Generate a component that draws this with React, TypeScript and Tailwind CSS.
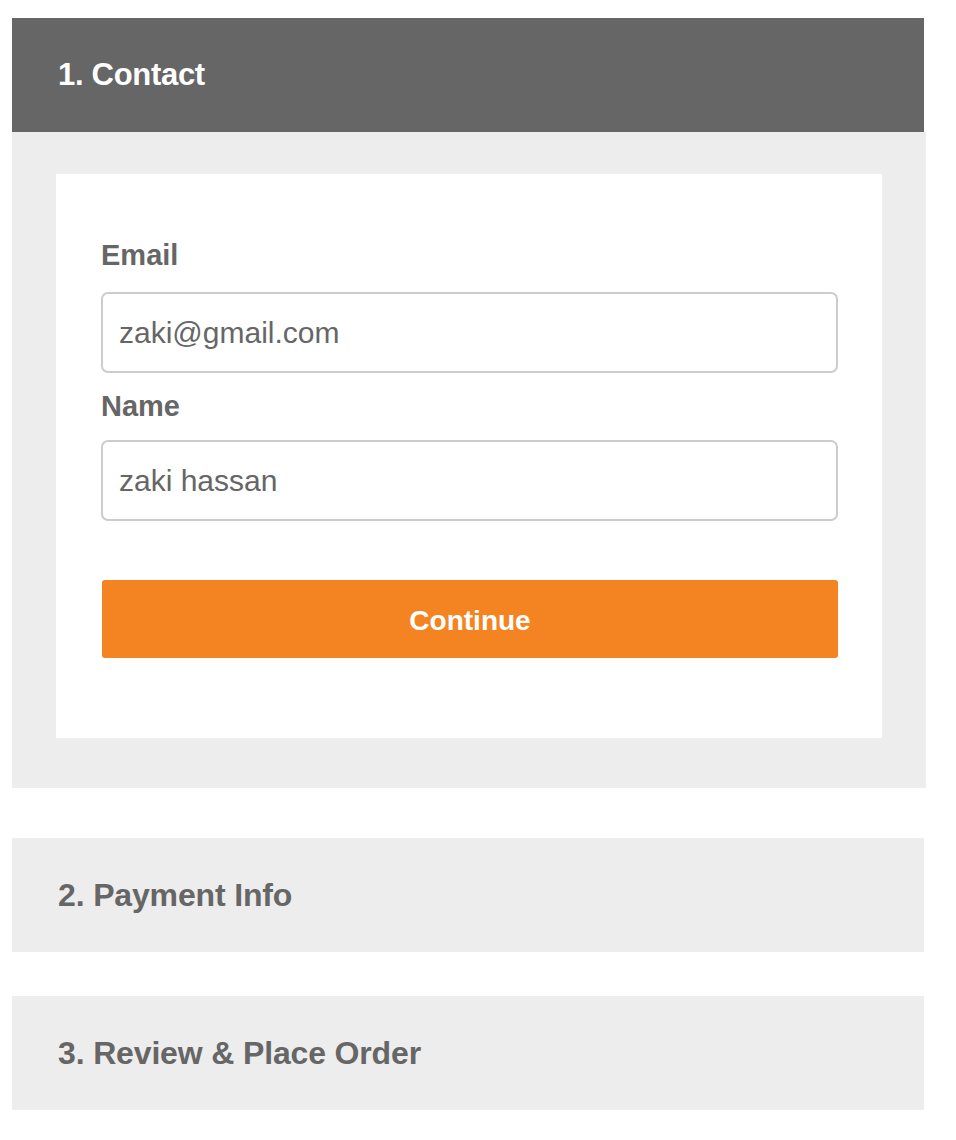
import { useState } from "react";

const font = { fontFamily: '"Liberation Sans", Arial, Helvetica, sans-serif' };

function CollapsedStep({ title, className = "" }: { title: string; className?: string }) {
  return (
    <div className={`flex h-[114px] w-[912px] items-center bg-[#ededed] pl-[46px] ${className}`}>
      <h2 className="text-[32px] font-bold leading-[36px] tracking-[-0.15px] text-[#666]">{title}</h2>
    </div>
  );
}

export default function App() {
  const [email, setEmail] = useState("zaki@gmail.com");
  const [name, setName] = useState("zaki hassan");

  return (
    <div className="min-h-[1140px] bg-white pl-[12px] pt-[18px]" style={font}>
      {/* Step 1: open */}
      <div className="flex h-[114px] w-[912px] items-center bg-[#666] pl-[46px]">
        <h2 className="text-[31px] font-bold leading-[36px] tracking-[-0.3px] text-white">1. Contact</h2>
      </div>
      <div className="w-[914px] bg-[#ededed] px-[44px] pb-[50px] pt-[42px]">
        <div className="bg-white px-[45px] pb-[80px] pt-[65px]">
          <label className="block text-[29px] font-bold leading-[32px] text-[#666]">Email</label>
          <input
            value={email}
            onChange={(e) => setEmail(e.target.value)}
            className="mt-[21px] block h-[81px] w-[737px] rounded-[7px] border-2 border-[#ccc] px-[16px] text-[30px] text-[#666] outline-none"
            style={font}
          />
          <label className="mt-[17px] block text-[29px] font-bold leading-[32px] text-[#666]">Name</label>
          <input
            value={name}
            onChange={(e) => setName(e.target.value)}
            className="mt-[18px] block h-[81px] w-[737px] rounded-[7px] border-2 border-[#ccc] px-[16px] text-[30px] text-[#666] outline-none"
            style={font}
          />
          <button
            className="ml-px mt-[59px] flex h-[78px] w-[736px] items-center justify-center rounded-[3px] bg-[#f38421] pt-[3px] text-[28px] font-bold text-white"
            style={font}
          >
            Continue
          </button>
        </div>
      </div>

      {/* Steps 2 and 3: collapsed */}
      <CollapsedStep title="2. Payment Info" className="mt-[50px]" />
      <CollapsedStep title="3. Review & Place Order" className="mt-[44px]" />
    </div>
  );
}
